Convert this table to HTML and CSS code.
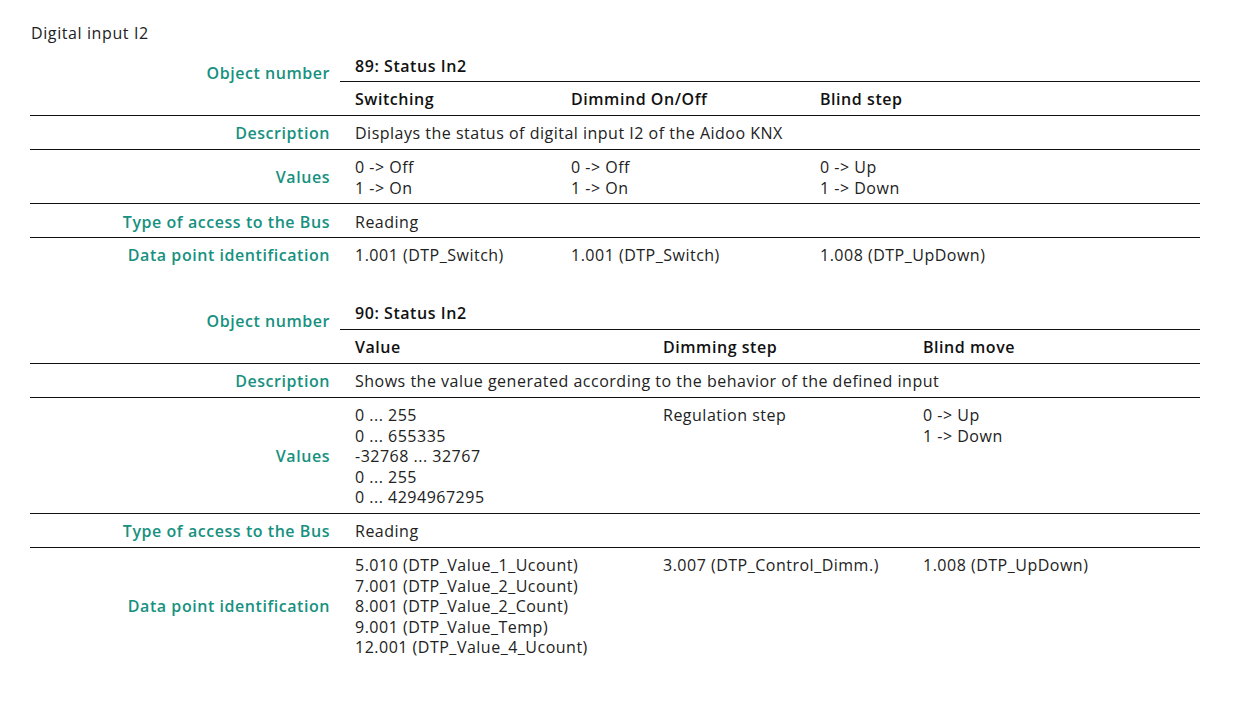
FILE: index.html
```html
<!DOCTYPE html>
<html lang="en">
<head>
<meta charset="utf-8">
<title>Digital input I2</title>
<link rel="stylesheet" href="styles.css">
</head>
<body>
<div class="page">
  <h2 class="section-title">Digital input I2</h2>

  <table class="obj obj-a">
    <colgroup><col class="c-label"><col class="c1"><col class="c2"><col class="c3"></colgroup>
    <tr class="title-row">
      <th class="label label-top" rowspan="2">Object number</th>
      <td class="title" colspan="3">89: Status In2</td>
    </tr>
    <tr class="head-row">
      <td>Switching</td><td>Dimmind On/Off</td><td>Blind step</td>
    </tr>
    <tr>
      <th class="label">Description</th>
      <td colspan="3">Displays the status of digital input I2 of the Aidoo KNX</td>
    </tr>
    <tr>
      <th class="label">Values</th>
      <td>0 -&gt; Off<br>1 -&gt; On</td>
      <td>0 -&gt; Off<br>1 -&gt; On</td>
      <td>0 -&gt; Up<br>1 -&gt; Down</td>
    </tr>
    <tr>
      <th class="label">Type of access to the Bus</th>
      <td colspan="3">Reading</td>
    </tr>
    <tr class="last">
      <th class="label">Data point identification</th>
      <td>1.001 (DTP_Switch)</td>
      <td>1.001 (DTP_Switch)</td>
      <td>1.008 (DTP_UpDown)</td>
    </tr>
  </table>

  <table class="obj obj-b">
    <colgroup><col class="c-label"><col class="c1"><col class="c2"><col class="c3"></colgroup>
    <tr class="title-row">
      <th class="label label-top" rowspan="2">Object number</th>
      <td class="title" colspan="3">90: Status In2</td>
    </tr>
    <tr class="head-row">
      <td>Value</td><td>Dimming step</td><td>Blind move</td>
    </tr>
    <tr>
      <th class="label">Description</th>
      <td colspan="3">Shows the value generated according to the behavior of the defined input</td>
    </tr>
    <tr>
      <th class="label">Values</th>
      <td>0 ... 255<br>0 ... 655335<br>-32768 ... 32767<br>0 ... 255<br>0 ... 4294967295</td>
      <td>Regulation step</td>
      <td>0 -&gt; Up<br>1 -&gt; Down</td>
    </tr>
    <tr>
      <th class="label">Type of access to the Bus</th>
      <td colspan="3">Reading</td>
    </tr>
    <tr class="last">
      <th class="label">Data point identification</th>
      <td>5.010 (DTP_Value_1_Ucount)<br>7.001 (DTP_Value_2_Ucount)<br>8.001 (DTP_Value_2_Count)<br>9.001 (DTP_Value_Temp)<br>12.001 (DTP_Value_4_Ucount)</td>
      <td>3.007 (DTP_Control_Dimm.)</td>
      <td>1.008 (DTP_UpDown)</td>
    </tr>
  </table>
</div>
</body>
</html>
```

FILE: styles.css
```css
* { box-sizing: border-box; }

html, body {
  margin: 0;
  padding: 0;
  background: #ffffff;
}

body {
  font-family: "Open Sans", "Liberation Sans", sans-serif;
  font-size: 16px;
  letter-spacing: 0.5px;
  color: #222222;
}

.page {
  padding: 23px 43px 0 30px;
  width: 1243px;
}

.section-title {
  margin: 0 0 0 1px;
  font-size: 16px;
  font-weight: 400;
  line-height: 20px;
  letter-spacing: 0.6px;
  color: #222222;
}

.obj {
  width: 1170px;
  table-layout: fixed;
  border-collapse: collapse;
  margin-top: 5px;
}

.obj-b { margin-top: 25px; }

.c-label { width: 310px; }
.obj-a .c1 { width: 216px; }
.obj-a .c2 { width: 249px; }
.obj-a .c3 { width: 395px; }
.obj-b .c1 { width: 308px; }
.obj-b .c2 { width: 260px; }
.obj-b .c3 { width: 292px; }

.obj td,
.obj th {
  padding: 7.5px 8px 5px 15px;
  line-height: 20.4px;
  vertical-align: top;
  text-align: left;
  font-weight: 400;
  border-bottom: 1px solid #111111;
}

.obj-b td,
.obj-b th {
  line-height: 20.5px;
}

.obj .label {
  padding-left: 0;
  padding-right: 10px;
  text-align: right;
  vertical-align: middle;
  color: #17917f;
  font-weight: 600;
  letter-spacing: 0.55px;
}

.obj .label-top {
  vertical-align: top;
  padding-top: 15px;
}

.obj .title,
.obj .head-row td {
  font-weight: 600;
  letter-spacing: 0.55px;
  color: #111111;
}

.obj .last td,
.obj .last th {
  border-bottom: none;
}
```
